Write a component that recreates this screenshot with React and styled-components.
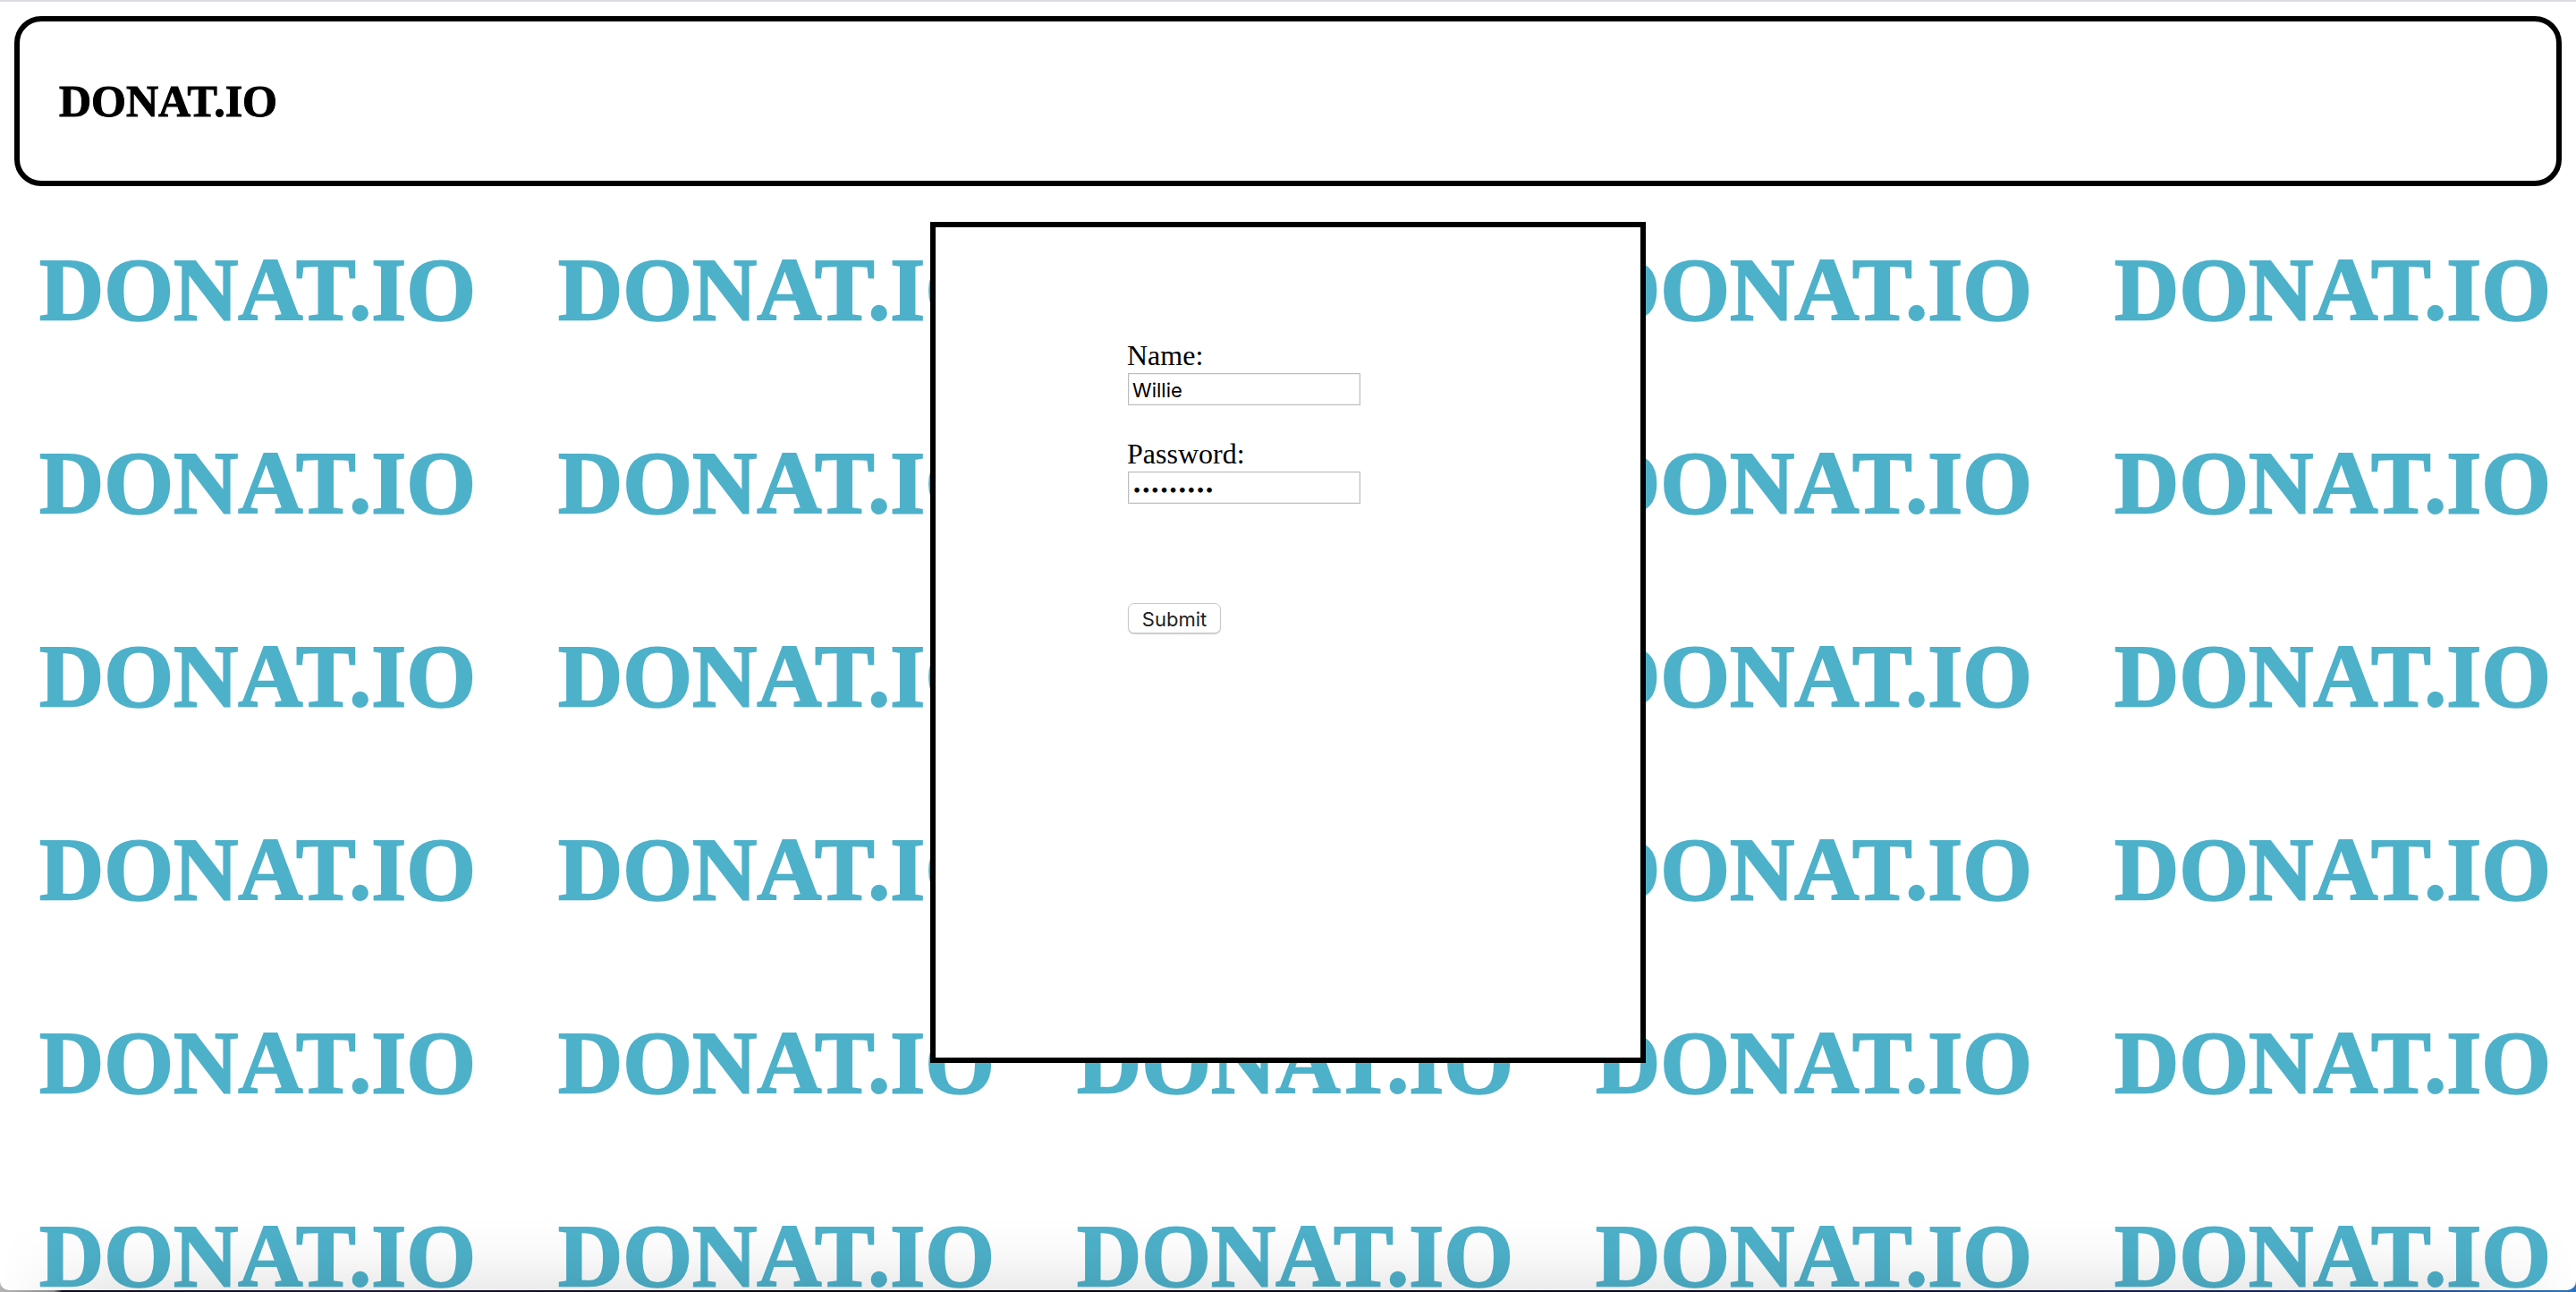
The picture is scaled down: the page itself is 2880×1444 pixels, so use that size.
import React from "react";
import styled, { createGlobalStyle } from "styled-components";

const GlobalStyle = createGlobalStyle`
  * {
    box-sizing: border-box;
  }

  body {
    margin: 0;
    background: #fff;
    color: #000;
    font-family: "Liberation Serif", "Times New Roman", serif;
    font-size: 32px;
    line-height: 36px;
  }
`;

const Desktop = styled.div`
  height: 100vh;
  padding-bottom: 2px;
  background: linear-gradient(
    to right,
    #b4b4b4 0,
    #8c8c8c 60px,
    #0a0a1c 70px,
    #1c1638 400px,
    #04030a 900px,
    #0a0820 2000px,
    #14245c 88%,
    #2a74be 100%
  );
`;

const Window = styled.div`
  display: grid;
  height: 100%;
  overflow: hidden;
  border-top: 2px solid #dcdae0;
  border-radius: 0 0 10px 10px;
  background: #fff;

  > * {
    grid-area: 1 / 1;
    min-width: 0;
    min-height: 0;
  }
`;

const Wallpaper = styled.div`
  display: grid;
  grid-template-columns: repeat(5, 580px);
  grid-auto-rows: 216px;
  padding-top: 214px;
  overflow: hidden;
  color: #4eb1ca;
  font-size: 100px;
  font-weight: bold;
  line-height: 216px;
  -webkit-text-stroke: 2px #4eb1ca;
  user-select: none;
`;

const Tile = styled.span`
  padding-left: 44px;
  white-space: nowrap;
`;

const Content = styled.div`
  display: flex;
  flex-direction: column;
  gap: 40px;
  padding: 16px;
`;

const Header = styled.header`
  display: flex;
  align-items: center;
  height: 190px;
  padding: 0 44px;
  border: 6px solid #000;
  border-radius: 30px;
  background: #fff;
`;

const Title = styled.h1`
  margin: 0;
  font-size: 50px;
  line-height: 56px;
  -webkit-text-stroke: 1px #000;
`;

const Card = styled.form`
  display: flex;
  flex-direction: column;
  align-items: flex-start;
  align-self: center;
  gap: 36px;
  width: 800px;
  min-height: 940px;
  padding: 125px 214px;
  border: 6px solid #000;
  background: #fff;
`;

const Field = styled.div`
  display: flex;
  flex-direction: column;
  gap: 2px;
`;

const TextInput = styled.input`
  width: 260px;
  height: 36px;
  margin-left: 1px;
  padding: 2px 4px 0;
  border: 1px solid #bdbdbd;
  border-radius: 0;
  background: #fff;
  box-shadow: inset 0 0 0 1px #f0f0f0;
  color: #000;
  font-family: Inter, sans-serif;
  font-size: ${({ type }) => (type === "password" ? "18px" : "22px")};
  outline: none;
`;

const SubmitButton = styled.button`
  width: 104px;
  height: 34px;
  margin: 75px 0 0 1px;
  padding: 1px 0 0;
  border: 1px solid #c8c8c8;
  border-radius: 7px;
  background: #fff;
  box-shadow: 0 1px 1px #d0d0d0;
  color: #222;
  font-family: Inter, sans-serif;
  font-size: 22px;
  line-height: 30px;
`;

const BottomShade = styled.div`
  align-self: end;
  height: 80px;
  background: linear-gradient(to bottom, rgba(0, 0, 0, 0), rgba(0, 0, 0, 0.025) 50%, rgba(0, 0, 0, 0.08));
  mask-image: linear-gradient(to right, transparent, #000 120px, #000 calc(100% - 120px), transparent);
  pointer-events: none;
`;

const tiles = Array.from({ length: 30 }, (_, index) => index);

export default function App() {
  return (
    <>
      <GlobalStyle />
      <Desktop>
        <Window>
          <Wallpaper aria-hidden="true">
            {tiles.map((tile) => (
              <Tile key={tile}>DONAT.IO</Tile>
            ))}
          </Wallpaper>
          <Content>
            <Header>
              <Title>DONAT.IO</Title>
            </Header>
            <Card onSubmit={(event) => event.preventDefault()}>
              <Field>
                <label htmlFor="name">Name:</label>
                <TextInput id="name" type="text" defaultValue="Willie" />
              </Field>
              <Field>
                <label htmlFor="password">Password:</label>
                <TextInput id="password" type="password" defaultValue="donations" />
              </Field>
              <SubmitButton type="submit">Submit</SubmitButton>
            </Card>
          </Content>
          <BottomShade />
        </Window>
      </Desktop>
    </>
  );
}
